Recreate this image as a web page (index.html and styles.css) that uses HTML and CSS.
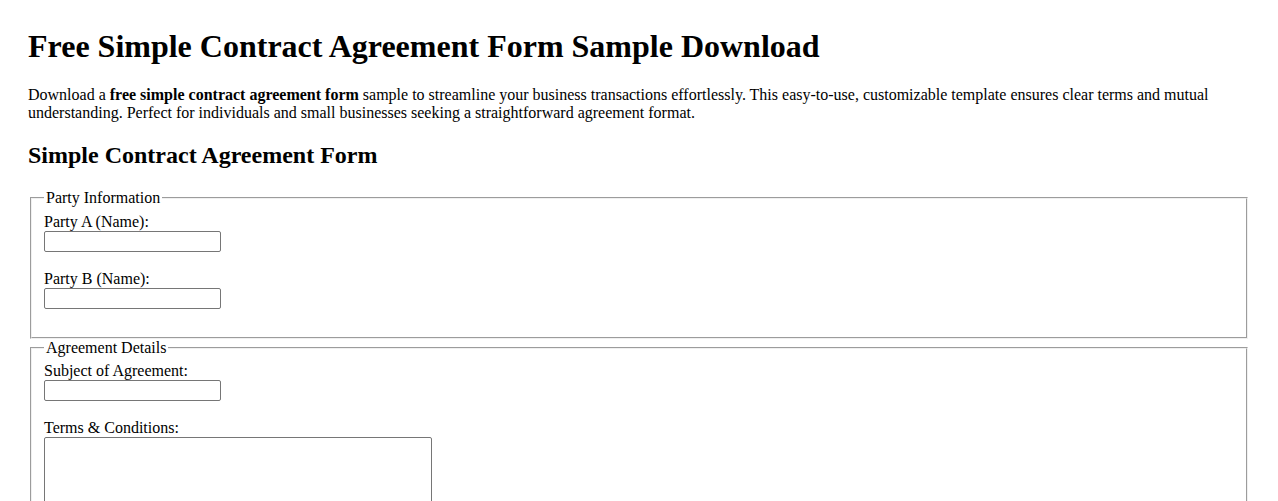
FILE: index.html
```html
<!DOCTYPE html>
<html lang="en">
<head>
  <meta charset="UTF-8">
  <meta name="viewport" content="width=device-width, initial-scale=1.0">
  <title>Free Simple Contract Agreement Form Sample Download</title>
  <link rel="stylesheet" href="styles.css">
</head>
<body>

  <h1>Free Simple Contract Agreement Form Sample Download</h1>
  <p>Download a <strong>free simple contract agreement form</strong> sample to streamline your business transactions effortlessly. This easy-to-use, customizable template ensures clear terms and mutual understanding. Perfect for individuals and small businesses seeking a straightforward agreement format.</p>

  <h2>Simple Contract Agreement Form</h2>

  <form>
    <!-- Parties -->
    <fieldset>
      <legend>Party Information</legend>
      <label for="party-a">Party A (Name):</label><br>
      <input type="text" id="party-a" name="party-a"><br><br>
      <label for="party-b">Party B (Name):</label><br>
      <input type="text" id="party-b" name="party-b"><br><br>
    </fieldset>

    <!-- Agreement -->
    <fieldset>
      <legend>Agreement Details</legend>
      <label for="subject">Subject of Agreement:</label><br>
      <input type="text" id="subject" name="subject"><br><br>
      <label for="terms">Terms &amp; Conditions:</label><br>
      <textarea id="terms" name="terms" rows="6"></textarea><br><br>
    </fieldset>
  </form>

</body>
</html>
```

FILE: styles.css
```css
body {
  margin: 0;
  padding: 28px;
  font-family: 'Liberation Serif', 'Times New Roman', serif;
  font-size: 16px;
  color: #000;
  background-color: #fff;
}

h1 {
  margin-top: 0;
}

fieldset {
  border: 2px groove #f0f0f0;
}

input[type="text"] {
  width: 177px;
  height: 21px;
  box-sizing: border-box;
  border: 1px solid #767676;
  border-radius: 2px;
}

textarea {
  width: 388px;
  box-sizing: border-box;
  height: 110px;
  border: 1px solid #767676;
  border-radius: 2px;
}
```
